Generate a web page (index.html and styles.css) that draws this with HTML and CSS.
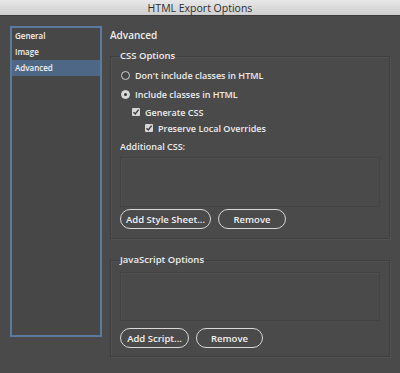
FILE: index.html
```html
<!DOCTYPE html>
<html>
<head>
    <meta charset="UTF-8">
    <title>HTML Export Options</title>
    <link rel="stylesheet" href="styles.css">
</head>
<body>

    <div class="titlebar">HTML Export Options</div>

    <div class="dialog">
        <ul class="nav">
            <li>General</li>
            <li>Image</li>
            <li class="active">Advanced</li>
        </ul>

        <div class="panel">
            <div class="panel-title">Advanced</div>

            <fieldset class="group css-group">
                <legend>CSS Options</legend>
                <div class="row radio-row first">
                    <span class="radio"></span>Don't include classes in HTML
                </div>
                <div class="row radio-row">
                    <span class="radio checked"></span>Include classes in HTML
                </div>
                <div class="row check-row level-1">
                    <span class="check"><svg width="8" height="8" viewBox="0 0 8 8"><path d="M1.5 4.2 L3.3 6 L6.6 1.6" fill="none" stroke="#3c3c3c" stroke-width="1.4"/></svg></span>Generate CSS
                </div>
                <div class="row check-row level-2">
                    <span class="check"><svg width="8" height="8" viewBox="0 0 8 8"><path d="M1.5 4.2 L3.3 6 L6.6 1.6" fill="none" stroke="#3c3c3c" stroke-width="1.4"/></svg></span>Preserve Local Overrides
                </div>
                <div class="field-label">Additional CSS:</div>
                <div class="list-box css-list"></div>
                <div class="button-container">
                    <button class="btn btn-stylesheet">Add Style Sheet...</button>
                    <button class="btn btn-remove">Remove</button>
                </div>
            </fieldset>

            <fieldset class="group js-group">
                <legend>JavaScript Options</legend>
                <div class="list-box js-list"></div>
                <div class="button-container js-buttons">
                    <button class="btn btn-script">Add Script...</button>
                    <button class="btn btn-remove-js">Remove</button>
                </div>
            </fieldset>
        </div>
    </div>

</body>
</html>
```

FILE: styles.css
```css
body {
    margin: 0;
    padding: 0;
    width: 400px;
    height: 373px;
    overflow: hidden;
    background-color: #4a4a4a;
    font-family: "Open Sans", "Noto Sans", sans-serif;
    font-size: 9px;
    font-weight: 600;
    color: #ececec;
}

.titlebar {
    height: 16px;
    line-height: 16px;
    text-align: center;
    font-size: 10.5px;
    font-weight: 400;
    color: #2e2e2e;
    background: linear-gradient(#e8e8e8, #cdcdcd);
    border-bottom: 1px solid #3a3a3a;
    box-sizing: border-box;
}

.dialog {
    display: flex;
    padding-top: 11px;
}

.nav {
    list-style: none;
    margin: -1px 0 0 10px;
    padding: 0;
    width: 92px;
    height: 311px;
    box-sizing: border-box;
    border: 2px solid #5a7aa0;
    background-color: #474747;
}

.nav li {
    height: 16px;
    line-height: 16px;
    padding-left: 3px;
    font-size: 8px;
    color: #f2f2f2;
}

.nav li.active {
    background-color: #4e6786;
}

.panel {
    margin-left: 8px;
    width: 280px;
}

.panel-title {
    height: 16px;
    line-height: 16px;
    font-size: 10px;
}

.group {
    margin: 6px 0 0 0;
    padding: 0 9px 0 9px;
    border: 1px solid #404040;
    box-shadow: inset 1px 1px 0 #515151, 1px 1px 0 #525252;
    min-width: 0;
}

.group legend {
    padding: 0;
    height: 14px;
    line-height: 14px;
    font-size: 9.5px;
}

.row {
    display: flex;
    align-items: center;
}

.radio-row {
    height: 19px;
}

.radio-row.first {
    margin-top: 3px;
}

.check-row {
    height: 16px;
}

.level-1 {
    padding-left: 12px;
}

.level-2 {
    padding-left: 25px;
}

.radio {
    width: 9px;
    height: 9px;
    box-sizing: border-box;
    border-radius: 50%;
    border: 1px solid #cfcfcf;
    background-color: #444444;
    margin: 0 5px 0 1px;
    position: relative;
}

.radio.checked {
    background-color: #d8d8d8;
    border-color: #d8d8d8;
}

.radio.checked::after {
    content: "";
    position: absolute;
    top: 2px;
    left: 2px;
    width: 3px;
    height: 3px;
    border-radius: 50%;
    background-color: #3a3a3a;
}

.check {
    width: 8px;
    height: 8px;
    background-color: #d6d6d6;
    border-radius: 1px;
    margin-right: 5px;
    display: flex;
}

.field-label {
    margin-top: 3px;
    height: 16px;
    line-height: 16px;
}

.list-box {
    margin-top: 2px;
    height: 48px;
    border: 1px solid #434343;
    box-shadow: inset 1px 1px 0 #4f4f4f;
    background-color: #4a4a4a;
}

.js-list {
    margin-top: 5px;
    height: 47px;
}

.button-container {
    display: flex;
    margin-top: 2px;
    margin-bottom: 9px;
}

.js-buttons {
    margin-top: 7px;
    margin-bottom: 8px;
}

.btn {
    height: 20px;
    box-sizing: border-box;
    border: 1px solid #d8d8d8;
    border-radius: 10px;
    background-color: transparent;
    color: #f2f2f2;
    font-family: "Open Sans", "Noto Sans", sans-serif;
    font-size: 9.5px;
    font-weight: 600;
    padding: 0;
    margin-right: 7px;
    cursor: pointer;
    outline: none;
}

.btn-stylesheet {
    width: 91px;
}

.btn-remove {
    width: 68px;
}

.btn-script {
    width: 69px;
}

.btn-remove-js {
    width: 67px;
}

.js-group {
    margin-top: 14px;
}
```
